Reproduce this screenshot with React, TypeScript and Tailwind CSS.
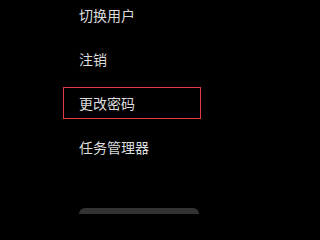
import React from "react";

const items = ["切换用户", "注销", "更改密码", "任务管理器"];

export default function App() {
  return (
    <div
      className="w-full min-h-screen overflow-hidden bg-black text-[#dcdcdc]"
      style={{ fontFamily: '"Noto Sans CJK SC", "Noto Sans", sans-serif' }}
    >
      <div className="w-[304px] h-[214px] overflow-hidden">
        <div className="flex flex-col gap-[12px] -mt-[1px]">
          {items.map((label, i) => (
            <div
              key={label}
              className={`ml-[63px] w-[138px] h-[32px] pl-[15px] flex items-center text-[14px] leading-none border ${
                i === 2 ? "border-[#e53b3f]" : "border-transparent"
              }`}
            >
              {label}
            </div>
          ))}
        </div>
        <div className="ml-[79px] mt-[45px] w-[120px] h-[20px] rounded-t-[6px] bg-[#333333]" />
      </div>
    </div>
  );
}
